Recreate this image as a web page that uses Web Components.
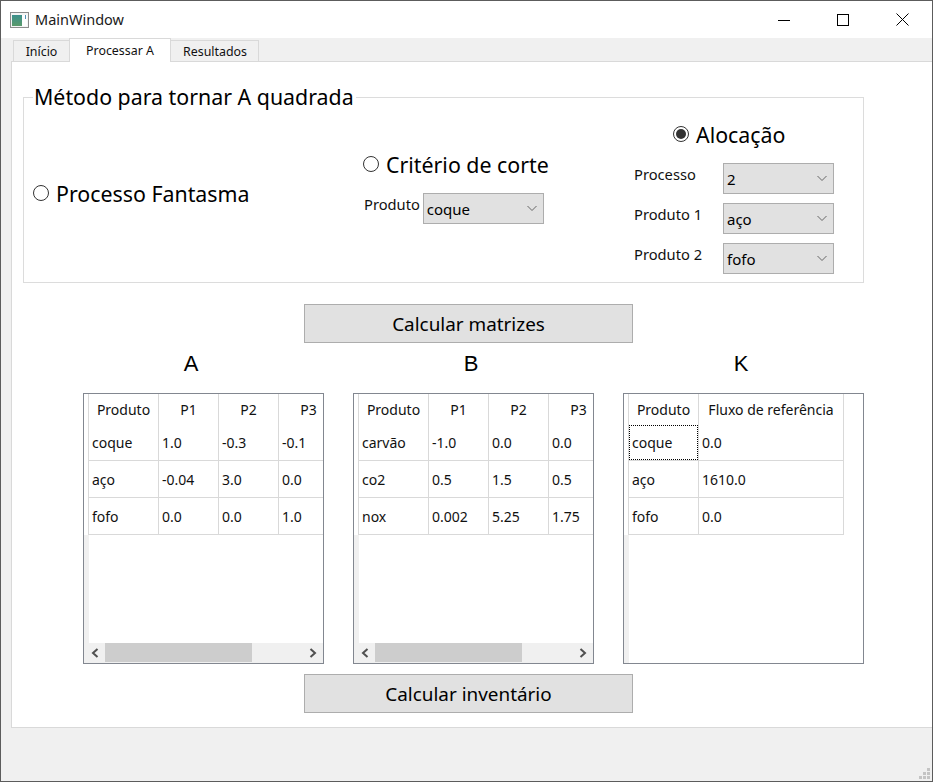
<!DOCTYPE html>
<html>
<head>
<meta charset="utf-8">
<title>MainWindow</title>
<style>
    html, body{
        margin: 0;
        background: #f0f0f0;
        overflow: hidden;
    }
</style>
</head>
<body>
<main-window>
    <group-box title="Método para tornar A quadrada">
        <div style="display:flex;align-items:flex-start;">
            <div style="width:330px;padding-top:82px;">
                <radio-option>Processo Fantasma</radio-option>
            </div>
            <div style="width:271px;padding-top:53px;">
                <radio-option>Critério de corte</radio-option>
                <form-row label="Produto" gap="3" style="margin:14px 0 0 1px"><combo-box value="coque" width="121"></combo-box></form-row>
            </div>
            <div style="padding-top:23px;">
                <radio-option checked style="margin-left:39px">Alocação</radio-option>
                <form-row label="Processo" style="margin-top:14px"><combo-box value="2"></combo-box></form-row>
                <form-row label="Produto 1" style="margin-top:9px"><combo-box value="aço"></combo-box></form-row>
                <form-row label="Produto 2" style="margin-top:9px"><combo-box value="fofo"></combo-box></form-row>
            </div>
        </div>
    </group-box>
    <push-button style="margin-top:21px">Calcular matrizes</push-button>
    <div style="display:flex;gap:29px;margin:7px 0 0 60px;">
        <data-table title="A" scroll style="--title-shift:25px" cols='["Produto","P1","P2","P3"]'
            rows='[["coque","1.0","-0.3","-0.1"],["aço","-0.04","3.0","0.0"],["fofo","0.0","0.0","1.0"]]'></data-table>
        <data-table title="B" scroll cols='["Produto","P1","P2","P3"]'
            rows='[["carvão","-1.0","0.0","0.0"],["co2","0.5","1.5","0.5"],["nox","0.002","5.25","1.75"]]'></data-table>
        <data-table title="K" focus cols='["Produto","Fluxo de referência"]' widths='[70,145]'
            rows='[["coque","0.0"],["aço","1610.0"],["fofo","0.0"]]'></data-table>
    </div>
    <push-button style="margin-top:10px">Calcular inventário</push-button>
</main-window>

<script>
const FONT = `'Noto Sans', 'Open Sans', sans-serif`;

class MainWindow extends HTMLElement {
    constructor() {
        super();
        this.attachShadow({ mode: 'open' }).innerHTML = `
        <style>
            :host{
                display: flex;
                flex-direction: column;
                box-sizing: border-box;
                width: 933px;
                height: 782px;
                border: 1px solid #5c5c5c;
                background: #f0f0f0;
                font-family: ${FONT};
                color: #000;
            }
            .title{
                display: flex;
                align-items: center;
                height: 37px;
                flex: none;
                background: #fff;
                font-size: 14.5px;
                color: #1a1a1a;
            }
            .title svg.logo{
                margin: 0 6px 0 9px;
            }
            .title span{
                flex: 1;
                margin-bottom: 2px;
            }
            .ctl{
                width: 59px;
                height: 37px;
                display: flex;
                align-items: center;
                justify-content: center;
            }
            .ctl.close{
                margin-left: 1px;
            }
            .tabs{
                display: flex;
                align-items: flex-end;
                height: 23px;
                flex: none;
                padding-left: 12px;
                font-size: 12.4px;
                position: relative;
                z-index: 1;
            }
            .tab{
                box-sizing: border-box;
                height: 21px;
                padding-top: 2px;
                text-align: center;
                background: #f0f0f0;
                border: 1px solid #d9d9d9;
                border-bottom: none;
                color: #111;
            }
            .tab.on{
                height: 24px;
                margin-bottom: -1px;
                padding-top: 3px;
                background: #fff;
            }
            .pane{
                box-sizing: border-box;
                height: 667px;
                flex: none;
                margin-left: 10px;
                background: #fff;
                border: 1px solid #d9d9d9;
                border-right: none;
                padding: 35px 0 0 11px;
            }
            .bottom{
                flex: 1;
                display: flex;
                justify-content: flex-end;
                align-items: flex-end;
                padding: 0 2px 2px 0;
            }
        </style>
        <div class="title">
            <svg class="logo" width="19" height="16" viewBox="0 0 19 16">
                <defs><linearGradient id="g" x1="0" y1="0" x2="0" y2="1">
                    <stop offset="0" stop-color="#3c8f8c"/><stop offset="1" stop-color="#5a9a6a"/>
                </linearGradient></defs>
                <rect x=".5" y=".5" width="18" height="15" fill="#f4f4f4" stroke="#8c8c8c"/>
                <rect x="2" y="3" width="10" height="11" fill="url(#g)"/>
                <rect x="12" y="3" width="5" height="11" fill="#fdfdfd"/>
                <rect x="15" y="3" width="1" height="4" fill="#4f8fb5"/>
            </svg>
            <span>MainWindow</span>
            <div class="ctl"><svg width="12" height="12"><path d="M0 6.5H12" stroke="#000"/></svg></div>
            <div class="ctl"><svg width="12" height="12"><rect x=".5" y=".5" width="11" height="11" fill="none" stroke="#000"/></svg></div>
            <div class="ctl close"><svg width="13" height="13"><path d="M.5 .5L12.5 12.5M12.5 .5L.5 12.5" stroke="#000" fill="none"/></svg></div>
        </div>
        <div class="tabs">
            <div class="tab" style="width:57px">Início</div>
            <div class="tab on" style="width:102px;margin-left:-1px">Processar A</div>
            <div class="tab" style="width:89px;margin-left:-1px;padding-left:1px">Resultados</div>
        </div>
        <div class="pane"><slot></slot></div>
        <div class="bottom">
            <svg width="11" height="11" fill="#c4c4c4">
                <rect x="8" y="0" width="3" height="3"/>
                <rect x="4" y="4" width="3" height="3"/><rect x="8" y="4" width="3" height="3"/>
                <rect x="0" y="8" width="3" height="3"/><rect x="4" y="8" width="3" height="3"/><rect x="8" y="8" width="3" height="3"/>
            </svg>
        </div>`;
    }
}

class GroupBox extends HTMLElement {
    constructor() {
        super();
        this.attachShadow({ mode: 'open' }).innerHTML = `
        <style>
            :host{
                display: block;
                box-sizing: border-box;
                width: 841px;
                height: 186px;
                border: 1px solid #dcdcdc;
                position: relative;
                padding-left: 9px;
            }
            .label{
                position: absolute;
                left: 9px;
                top: -15px;
                padding: 0 2px 0 1px;
                background: #fff;
                font-size: 21.35px;
                line-height: 28px;
                white-space: nowrap;
            }
        </style>
        <div class="label"></div>
        <slot></slot>`;
    }
    connectedCallback() {
        this.shadowRoot.querySelector('.label').textContent = this.getAttribute('title');
    }
}

class RadioOption extends HTMLElement {
    constructor() {
        super();
        this.attachShadow({ mode: 'open' }).innerHTML = `
        <style>
            :host{
                display: flex;
                align-items: center;
                gap: 7px;
                font-size: 21.35px;
                line-height: 28px;
                white-space: nowrap;
            }
            .dot{
                box-sizing: border-box;
                width: 16px;
                height: 16px;
                border-radius: 50%;
                border: 1px solid #333;
                background: #fff;
                display: flex;
                align-items: center;
                justify-content: center;
                margin-top: -3px;
            }
            :host([checked]) .dot::after{
                content: '';
                width: 10px;
                height: 10px;
                border-radius: 50%;
                background: #333;
            }
        </style>
        <div class="dot"></div>
        <div><slot></slot></div>`;
    }
}

class FormRow extends HTMLElement {
    constructor() {
        super();
        this.attachShadow({ mode: 'open' }).innerHTML = `
        <style>
            :host{
                display: flex;
                align-items: flex-start;
                font-size: 14.7px;
                line-height: 20px;
                white-space: nowrap;
                color: #111;
            }
            .text{
                padding-top: 1px;
            }
        </style>
        <div class="text"></div>
        <slot></slot>`;
    }
    connectedCallback() {
        const text = this.shadowRoot.querySelector('.text');
        text.textContent = this.getAttribute('label');
        // the right column has a fixed label width, the middle one just a gap
        if (this.getAttribute('gap')) {
            text.style.marginRight = this.getAttribute('gap') + 'px';
        } else {
            text.style.width = '89px';
        }
    }
}

class ComboBox extends HTMLElement {
    constructor() {
        super();
        this.attachShadow({ mode: 'open' }).innerHTML = `
        <style>
            :host{
                display: flex;
                align-items: center;
                justify-content: space-between;
                box-sizing: border-box;
                width: 111px;
                height: 31px;
                border: 1px solid #adadad;
                background: #e1e1e1;
                padding: 0 6px 0 3px;
                font-size: 15px;
                color: #000;
            }
        </style>
        <span></span>
        <svg width="10" height="5"><path d="M.5 0L5 4.5L9.5 0" fill="none" stroke="#666"/></svg>`;
    }
    connectedCallback() {
        this.shadowRoot.querySelector('span').textContent = this.getAttribute('value');
        if (this.getAttribute('width')) this.style.width = this.getAttribute('width') + 'px';
    }
}

class PushButton extends HTMLElement {
    constructor() {
        super();
        this.attachShadow({ mode: 'open' }).innerHTML = `
        <style>
            :host{
                display: flex;
                align-items: center;
                justify-content: center;
                box-sizing: border-box;
                width: 329px;
                height: 39px;
                margin-left: 281px;
                border: 1px solid #adadad;
                background: #e1e1e1;
                font-size: 18.9px;
                color: #000;
                padding-top: 1px;
            }
        </style>
        <slot></slot>`;
    }
}

class DataTable extends HTMLElement {
    constructor() {
        super();
        this.attachShadow({ mode: 'open' }).innerHTML = `
        <style>
            :host{
                display: block;
                width: 241px;
            }
            h3{
                margin: 0;
                height: 43px;
                font: 400 22px/28px 'Liberation Sans', sans-serif;
                text-align: center;
                padding-right: var(--title-shift, 5px);
                box-sizing: border-box;
            }
            .frame{
                box-sizing: border-box;
                height: 271px;
                border: 1px solid #828790;
                display: flex;
                flex-direction: column;
                background: #fff;
                overflow: hidden;
            }
            .body{
                flex: 1;
                min-height: 0;
                display: flex;
                overflow: hidden;
            }
            .stub{
                flex: none;
                width: 5px;
                background: linear-gradient(#fff 141px, #f0f0f0 141px);
            }
            .grid{
                display: grid;
                align-content: start;
                grid-auto-rows: 37px;
                grid-template-rows: 30px;
                font-size: 14px;
                color: #111;
                white-space: nowrap;
            }
            .head, .cell{
                box-sizing: border-box;
                border-right: 1px solid #d9d9d9;
                display: flex;
                align-items: center;
            }
            .head{
                justify-content: center;
            }
            .cell{
                border-bottom: 1px solid #d9d9d9;
                padding: 0 0 0 3px;
            }
            .head:first-child{
                border-left: 1px solid #d9d9d9;
                margin-left: -1px;
            }
            .rowstart{
                border-left: 1px solid #d9d9d9;
                margin-left: -1px;
            }
            .focus{
                outline: 1px dotted #000;
                outline-offset: -2px;
            }
            .bar{
                flex: none;
                height: 20px;
                background: #f0f0f0;
                display: flex;
                align-items: stretch;
            }
            .arrow{
                width: 21px;
                display: flex;
                align-items: center;
                justify-content: center;
            }
            .thumb{
                width: 147px;
                height: 19px;
                background: #cdcdcd;
            }
            .track{
                flex: 1;
            }
        </style>
        <h3></h3>
        <div class="frame">
            <div class="body">
                <div class="stub"></div>
                <div class="grid"></div>
            </div>
        </div>`;
    }
    connectedCallback() {
        const root = this.shadowRoot;
        const cols = JSON.parse(this.getAttribute('cols'));
        const rows = JSON.parse(this.getAttribute('rows'));
        const widths = JSON.parse(this.getAttribute('widths') || '[70,60,60,60]');
        root.querySelector('h3').textContent = this.getAttribute('title');

        const grid = root.querySelector('.grid');
        grid.style.gridTemplateColumns = widths.map(w => w + 'px').join(' ');
        cols.forEach(c => {
            const el = document.createElement('div');
            el.className = 'head';
            el.textContent = c;
            grid.appendChild(el);
        });
        rows.forEach((row, r) => {
            row.forEach((c, i) => {
                const el = document.createElement('div');
                el.className = 'cell';
                if (i === 0) el.classList.add('rowstart');
                if (this.hasAttribute('focus') && r === 0 && i === 0) el.classList.add('focus');
                el.textContent = c;
                grid.appendChild(el);
            });
        });

        if (this.hasAttribute('scroll')) {
            const bar = document.createElement('div');
            bar.className = 'bar';
            bar.innerHTML = `
                <div class="arrow"><svg width="8" height="10"><path d="M6.5 1L2 5L6.5 9" fill="none" stroke="#505050" stroke-width="2"/></svg></div>
                <div class="thumb"></div>
                <div class="track"></div>
                <div class="arrow"><svg width="8" height="10"><path d="M1.5 1L6 5L1.5 9" fill="none" stroke="#505050" stroke-width="2"/></svg></div>`;
            root.querySelector('.frame').appendChild(bar);
        }
    }
}

window.customElements.define('main-window', MainWindow);
window.customElements.define('group-box', GroupBox);
window.customElements.define('radio-option', RadioOption);
window.customElements.define('form-row', FormRow);
window.customElements.define('combo-box', ComboBox);
window.customElements.define('push-button', PushButton);
window.customElements.define('data-table', DataTable);
</script>
</body>
</html>
